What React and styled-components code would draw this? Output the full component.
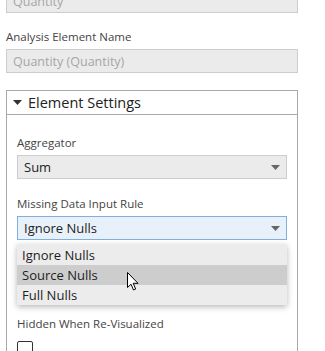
import React from 'react';
import styled, { createGlobalStyle } from 'styled-components';

const GlobalStyle = createGlobalStyle`
  html, body {
    margin: 0;
    padding: 0;
    background: #ffffff;
    overflow: hidden;
  }
  body {
    font-family: "Open Sans", "Noto Sans", sans-serif;
    color: #333;
  }
`;

const Page = styled.div`
  width: 292px;
  margin-top: -11px;
  padding-left: 6px;
  display: flex;
  flex-direction: column;
`;

const FieldLabel = styled.div`
  font-size: 11.5px;
  line-height: 16px;
  color: #444;
  margin-top: ${(p) => p.$top || 16}px;
  margin-bottom: 4px;
`;

const ReadOnlyBox = styled.div`
  box-sizing: border-box;
  height: 24px;
  padding: 0 6px;
  display: flex;
  align-items: center;
  background: #ebebeb;
  border: 1px solid #cdcdcd;
  color: #a6a6a6;
  font-size: 12.5px;
`;

const Panel = styled.div`
  margin-top: 17px;
  border: 1px solid #a9a9a9;
  border-bottom: none;
  display: flex;
  flex-direction: column;
`;

const PanelHeader = styled.div`
  height: 23px;
  display: flex;
  align-items: center;
  gap: 6px;
  padding-left: 6px;
  border-bottom: 1px solid #a9a9a9;
  font-size: 14.5px;
  color: #222;
`;

const PanelBody = styled.div`
  padding: 2px 10px 20px 10px;
  display: flex;
  flex-direction: column;
`;

const SelectWrap = styled.div`
  position: relative;
`;

const SelectBox = styled.div`
  box-sizing: border-box;
  height: 24px;
  padding: 0 6px;
  display: flex;
  align-items: center;
  justify-content: space-between;
  background: ${(p) => (p.$open ? '#e8f1fa' : '#ebebeb')};
  border: 1px solid ${(p) => (p.$open ? '#82b0dc' : '#cdcdcd')};
  color: #222;
  font-size: 13px;
`;

const DropList = styled.div`
  position: absolute;
  top: 28px;
  left: 0;
  right: 0;
  padding-top: 1px;
  background: #ececec;
  box-shadow: 0 2px 6px rgba(0, 0, 0, 0.28);
  z-index: 5;
`;

const DropItem = styled.div`
  height: 20px;
  padding-left: 5px;
  display: flex;
  align-items: center;
  font-size: 13px;
  color: #1e1e1e;
  background: ${(p) => (p.$hover ? '#cdcdcd' : '#ececec')};
`;

const Pointer = styled.svg`
  position: absolute;
  left: 110px;
  top: 28px;
  width: 12px;
  height: 19px;
`;

const Checkbox = styled.div`
  box-sizing: border-box;
  width: 16px;
  height: 16px;
  border: 1px solid #333;
  border-radius: 2px;
  background: #fff;
  margin-top: 5px;
`;

const Caret = ({ color = '#666', w = 9 }) => (
  <svg width={w} height={5} viewBox="0 0 9 5">
    <path d="M0 0 L9 0 L4.5 5 Z" fill={color} />
  </svg>
);

const options = ['Ignore Nulls', 'Source Nulls', 'Full Nulls'];

export default function App() {
  return (
    <>
      <GlobalStyle />
      <Page>
        <ReadOnlyBox>Quantity</ReadOnlyBox>
        <FieldLabel>Analysis Element Name</FieldLabel>
        <ReadOnlyBox>Quantity (Quantity)</ReadOnlyBox>
        <Panel>
          <PanelHeader>
            <Caret color="#333" w={9} />
            Element Settings
          </PanelHeader>
          <PanelBody>
            <FieldLabel $top={18}>Aggregator</FieldLabel>
            <SelectBox>
              Sum
              <Caret />
            </SelectBox>
            <FieldLabel $top={17}>Missing Data Input Rule</FieldLabel>
            <SelectWrap>
              <SelectBox $open>
                Ignore Nulls
                <Caret />
              </SelectBox>
              <DropList>
                {options.map((o) => (
                  <DropItem key={o} $hover={o === 'Source Nulls'}>
                    {o}
                  </DropItem>
                ))}
                <Pointer viewBox="0 0 12 19">
                  <path
                    d="M0.5 0.5 L0.5 15.5 L4 12.2 L6.5 18 L8.7 17 L6.2 11.3 L11 11.3 Z"
                    fill="#fff"
                    stroke="#000"
                    strokeWidth="1"
                    strokeLinejoin="round"
                  />
                </Pointer>
              </DropList>
            </SelectWrap>
            <FieldLabel $top={76}>Hidden When Re-Visualized</FieldLabel>
            <Checkbox />
          </PanelBody>
        </Panel>
      </Page>
    </>
  );
}
